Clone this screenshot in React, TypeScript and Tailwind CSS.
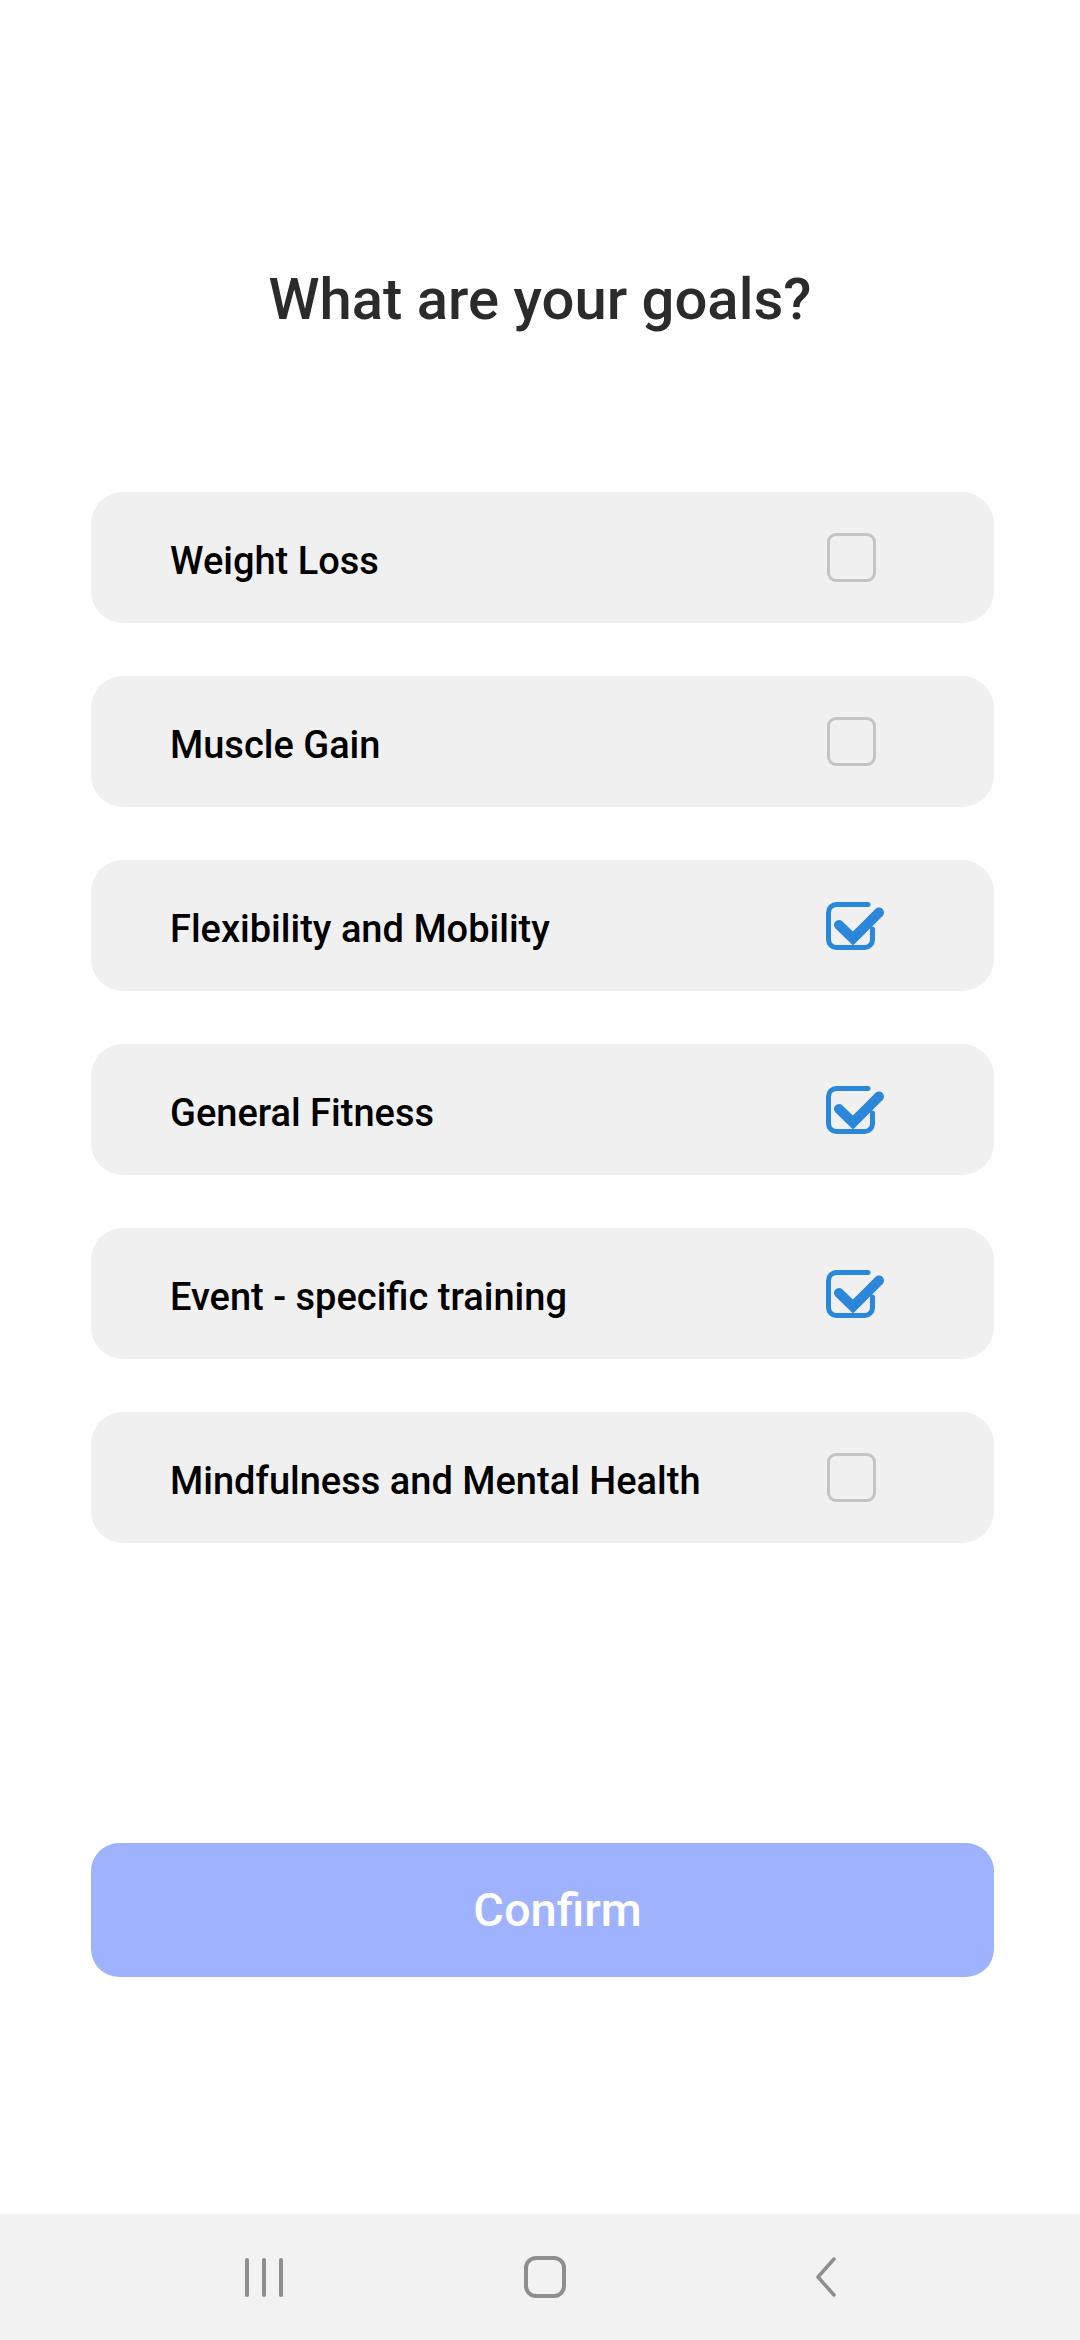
import { useState } from 'react'

const goals = [
  { label: 'Weight Loss', checked: false },
  { label: 'Muscle Gain', checked: false },
  { label: 'Flexibility and Mobility', checked: true },
  { label: 'General Fitness', checked: true },
  { label: 'Event - specific training', checked: true },
  { label: 'Mindfulness and Mental Health', checked: false },
]

function CheckIcon({ checked }: { checked: boolean }) {
  if (!checked) {
    return (
      <div className="flex h-[60px] w-[60px] items-center justify-center">
        <div className="h-[49px] w-[49px] rounded-[9px] border-[3px] border-[#c4c4c4]" />
      </div>
    )
  }
  return (
    <svg width="60" height="60" viewBox="0 0 60 60" fill="none" className="translate-x-[3px]">
      <path
        d="M44 8.5H12.5A8 8 0 0 0 4.5 16.5V43.5A8 8 0 0 0 12.5 51.5H40.5A8 8 0 0 0 48.5 43.5V33"
        stroke="#2a87d9"
        strokeWidth="5"
        strokeLinecap="round"
      />
      <polyline points="15,29 29,42.5 55,16.5" stroke="#2a87d9" strokeWidth="10" strokeLinejoin="miter" strokeLinecap="round" />
    </svg>
  )
}

export default function App() {
  const [items, setItems] = useState(goals)

  const toggle = (i: number) =>
    setItems((prev) => prev.map((g, idx) => (idx === i ? { ...g, checked: !g.checked } : g)))

  return (
    <div className="flex h-[2340px] w-[1080px] flex-col bg-white font-['Roboto',sans-serif]">
      <div className="flex flex-1 flex-col px-[91px] pt-[263px]">
        <h1 className="text-center text-[58px] font-medium leading-[72px] text-[#2b2b2b]">What are your goals?</h1>

        <div className="mt-[157px] flex flex-col gap-[53px]">
          {items.map((g, i) => (
            <button
              key={g.label}
              onClick={() => toggle(i)}
              className="flex h-[131px] w-[903px] items-center justify-between rounded-[32px] bg-[#f0f0f0] pl-[79px] pr-[113px] text-left"
            >
              <span className="mt-[8px] text-[38px] font-medium text-black">{g.label}</span>
              <CheckIcon checked={g.checked} />
            </button>
          ))}
        </div>

        <button className="mt-[300px] flex h-[134px] w-[903px] items-center justify-center rounded-[28px] bg-[#9fb2fd] pl-[30px] text-[47px] font-medium text-white">
          Confirm
        </button>
      </div>

      <nav className="flex h-[126px] items-center bg-[#f2f2f2]">
        <div className="flex w-full items-center justify-between pl-[245px] pr-[242px]">
          <div className="flex gap-[13px]">
            <div className="h-[39px] w-[4px] rounded-full bg-[#8e8e8e]" />
            <div className="h-[39px] w-[4px] rounded-full bg-[#8e8e8e]" />
            <div className="h-[39px] w-[4px] rounded-full bg-[#8e8e8e]" />
          </div>
          <div className="h-[42px] w-[42px] -translate-x-[4px] rounded-[12px] border-[4px] border-[#8e8e8e]" />
          <svg width="24" height="42" viewBox="0 0 24 42" fill="none">
            <polyline points="20,3 4,21 20,39" stroke="#8e8e8e" strokeWidth="3.5" strokeLinecap="round" strokeLinejoin="round" />
          </svg>
        </div>
      </nav>
    </div>
  )
}
